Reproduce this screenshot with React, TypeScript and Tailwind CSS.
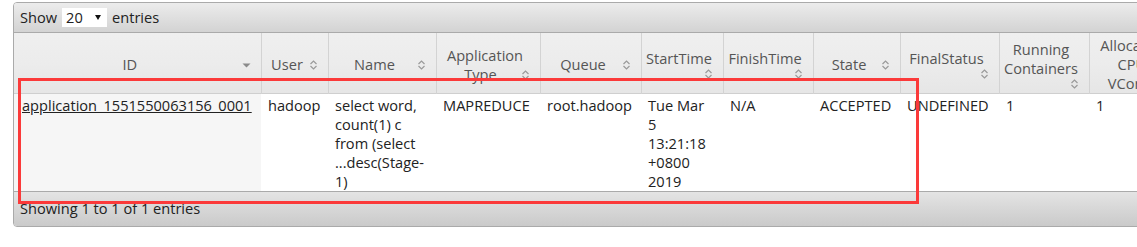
import React from "react";

type Col = {
  lines: string[];
  width: number;
  icon: "sort" | "desc" | "none";
  iconOwnLine?: boolean;
};

const cols: Col[] = [
  { lines: ["ID"], width: 247, icon: "desc" },
  { lines: ["User"], width: 67, icon: "sort" },
  { lines: ["Name"], width: 108, icon: "sort" },
  { lines: ["Application", "Type"], width: 104, icon: "sort" },
  { lines: ["Queue"], width: 101, icon: "sort" },
  { lines: ["StartTime"], width: 82, icon: "sort", iconOwnLine: true },
  { lines: ["FinishTime"], width: 90, icon: "sort", iconOwnLine: true },
  { lines: ["State"], width: 87, icon: "sort" },
  { lines: ["FinalStatus"], width: 99, icon: "sort", iconOwnLine: true },
  { lines: ["Running", "Containers"], width: 90, icon: "sort", iconOwnLine: true },
  { lines: ["Allocated", "CPU", "VCores"], width: 91, icon: "none" },
];

const row: string[][] = [
  ["application_1551550063156_0001"],
  ["hadoop"],
  ["select word,", "count(1) c", "from (select", "...desc(Stage-", "1)"],
  ["MAPREDUCE"],
  ["root.hadoop"],
  ["Tue Mar", "5", "13:21:18", "+0800", "2019"],
  ["N/A"],
  ["ACCEPTED"],
  ["UNDEFINED"],
  ["1"],
  ["1"],
];

function SortIcon() {
  return (
    <svg width="9" height="12" viewBox="0 0 9 12" className="block">
      <path d="M1.5 5 L4.5 2 L7.5 5" fill="none" stroke="#9a9a9a" strokeWidth="1.2" />
      <path d="M1.5 7 L4.5 10 L7.5 7" fill="none" stroke="#9a9a9a" strokeWidth="1.2" />
    </svg>
  );
}

function DescIcon() {
  return (
    <svg width="9" height="12" viewBox="0 0 9 12" className="block">
      <polygon points="0.5,4.5 8.5,4.5 4.5,8.5" fill="#8a8a8a" />
    </svg>
  );
}

function HeaderCell({ col }: { col: Col }) {
  const icon =
    col.icon === "sort" ? <SortIcon /> : col.icon === "desc" ? <DescIcon /> : null;
  const last = col.lines.length - 1;
  return (
    <th
      className="border-l border-[#d3d3d3] first:border-l-0 pl-[4px] pr-[10px] pt-[3px] pb-0 align-middle font-normal text-[#555] leading-[19px]"
      style={{ width: col.width }}
    >
      <div className="text-center">
        {col.lines.map((l, i) => (
          <React.Fragment key={i}>
            {i === last && icon && !col.iconOwnLine && (
              <span className="float-right mt-[4px]">{icon}</span>
            )}
            {l}
            {i < last && <br />}
          </React.Fragment>
        ))}
      </div>
      {icon && col.iconOwnLine && (
        <div className="flex justify-end h-[12px]">{icon}</div>
      )}
    </th>
  );
}

export default function App() {
  return (
    <div
      className="relative w-[1137px] h-[247px] overflow-hidden bg-white"
      style={{ fontFamily: "'Open Sans', 'Noto Sans', sans-serif" }}
    >
      <div className="ml-[13px] mt-[2px] w-[1200px] border border-[#aaa] rounded-l-[4px] overflow-hidden text-[14.6px] text-[#222]">
        {/* Toolbar */}
        <div className="h-[30px] flex items-center pl-[6px] gap-[5px] bg-gradient-to-b from-[#ececec] to-[#d3d3d3] border-b border-[#aaa]">
          <span>Show</span>
          <div className="w-[45px] h-[19px] bg-white flex items-center justify-between pl-[4px] pr-[6px] leading-none">
            <span>20</span>
            <svg width="6" height="5" viewBox="0 0 6 5">
              <polygon points="0,0 6,0 3,5" fill="#111" />
            </svg>
          </div>
          <span>entries</span>
        </div>

        {/* Table */}
        <table className="table-fixed border-collapse" style={{ width: cols.reduce((s, c) => s + c.width, 0) }}>
          <thead>
            <tr className="h-[59px] bg-gradient-to-b from-[#efefef] via-[#ececec] to-[#e6e6e6] border-b border-[#cfcfcf]">
              {cols.map((c, i) => (
                <HeaderCell key={i} col={c} />
              ))}
            </tr>
          </thead>
          <tbody>
            <tr>
              {row.map((cell, i) => (
                <td
                  key={i}
                  className={`align-top pt-[2px] pb-0 pl-[7px] pr-[4px] leading-[19px] whitespace-nowrap ${
                    i === 0 ? "bg-[#f6f6f6] pl-[8px]" : "bg-white"
                  }`}
                >
                  {i === 0 ? (
                    <span className="underline">{cell[0]}</span>
                  ) : (
                    cell.map((l, j) => <div key={j}>{l}</div>)
                  )}
                </td>
              ))}
            </tr>
          </tbody>
        </table>

        {/* Footer */}
        <div className="h-[35px] flex items-center pl-[6px] border-t border-[#aaa] bg-gradient-to-b from-[#e4e4e4] to-[#cacaca]">
          Showing 1 to 1 of 1 entries
        </div>
      </div>

      {/* Annotation */}
      <div className="absolute left-[18px] top-[78px] w-[901px] h-[126px] border-[3px] border-[#fb3a3a] pointer-events-none" />
    </div>
  );
}
